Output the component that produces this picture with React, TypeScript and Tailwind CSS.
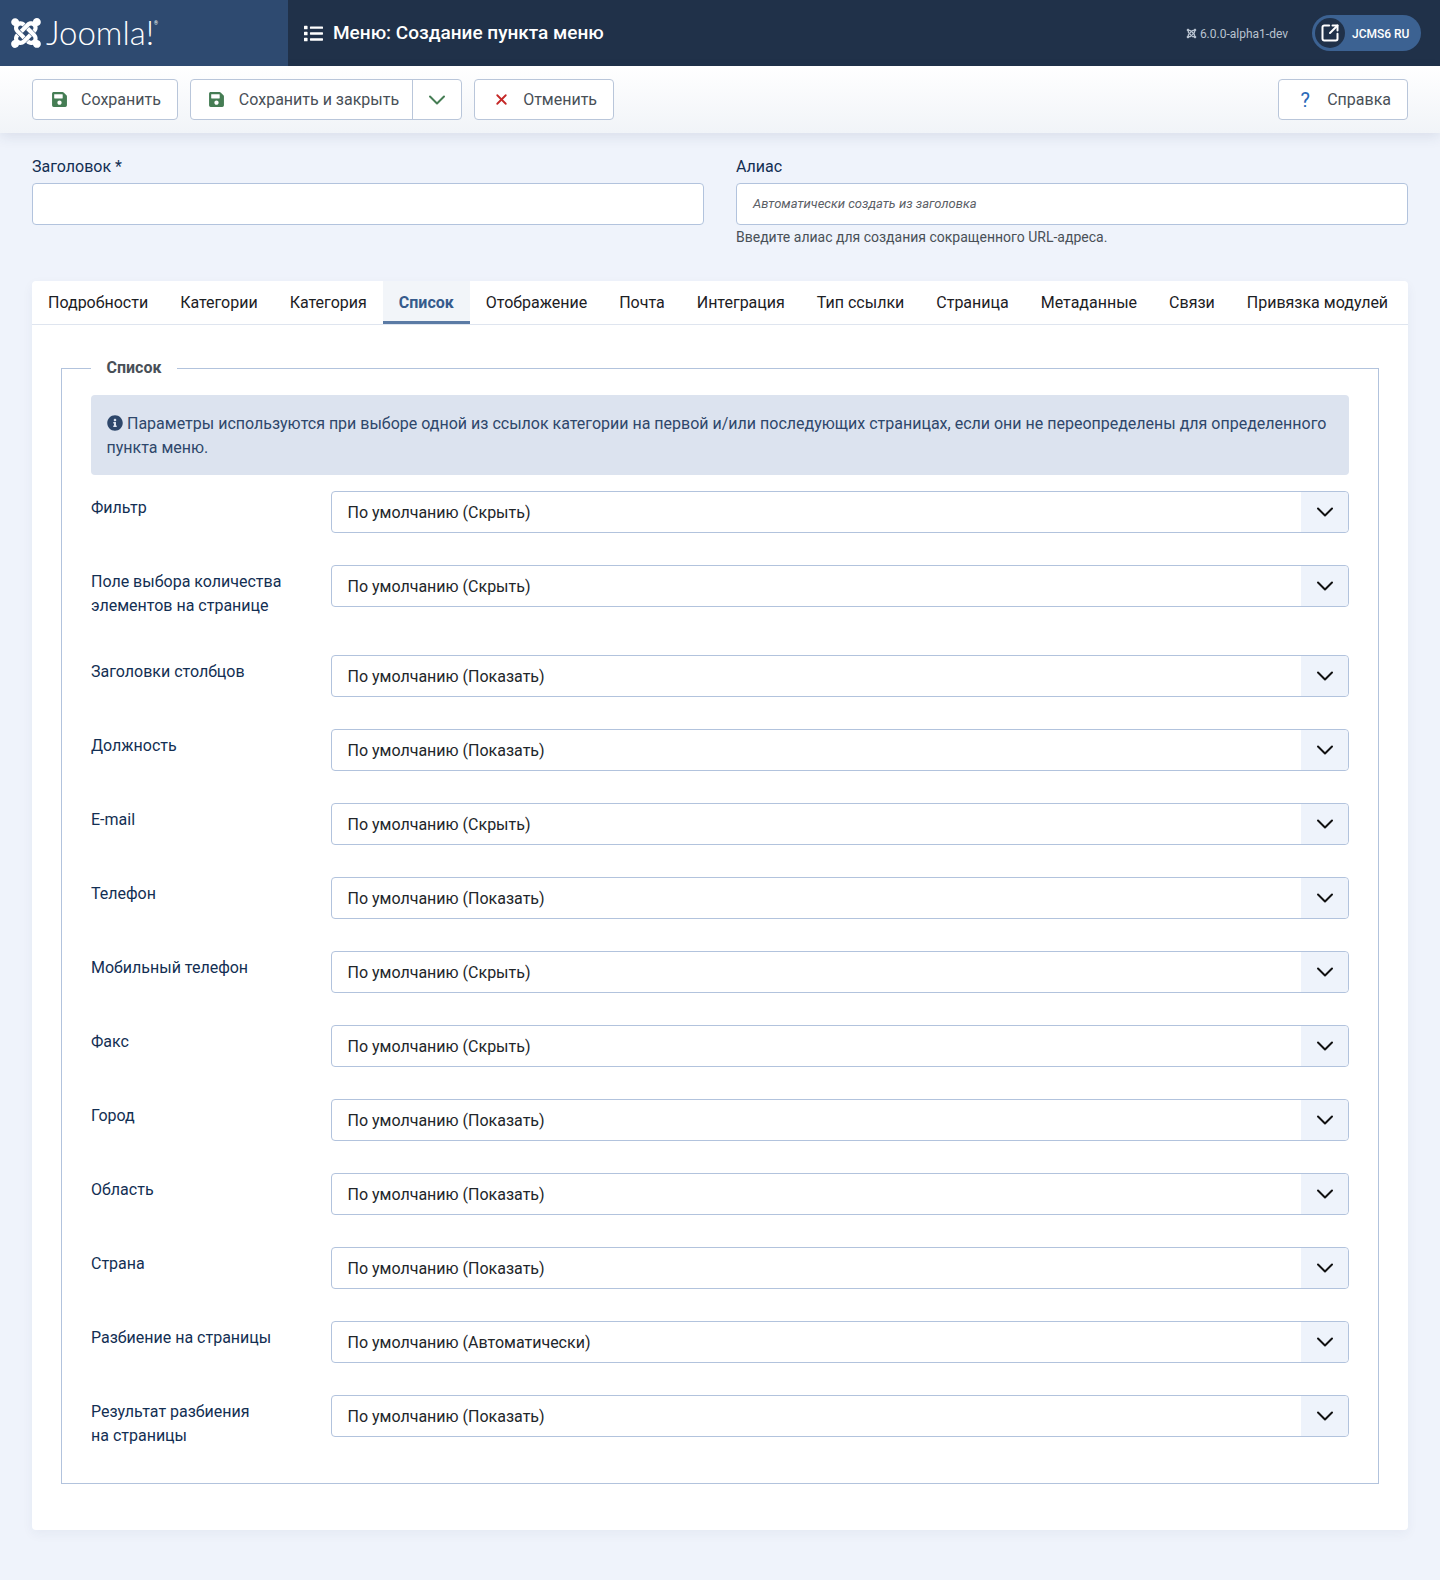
import { ChevronDown, SquareArrowOutUpRight, X } from "lucide-react";
import { FaInfoCircle, FaJoomla, FaList, FaSave } from "react-icons/fa";

const tabs = [
  "Подробности",
  "Категории",
  "Категория",
  "Список",
  "Отображение",
  "Почта",
  "Интеграция",
  "Тип ссылки",
  "Страница",
  "Метаданные",
  "Связи",
  "Привязка модулей",
];

const HIDE = "По умолчанию (Скрыть)";
const SHOW = "По умолчанию (Показать)";

const rows: { label: string[]; value: string }[] = [
  { label: ["Фильтр"], value: HIDE },
  { label: ["Поле выбора количества", "элементов на странице"], value: HIDE },
  { label: ["Заголовки столбцов"], value: SHOW },
  { label: ["Должность"], value: SHOW },
  { label: ["E-mail"], value: HIDE },
  { label: ["Телефон"], value: SHOW },
  { label: ["Мобильный телефон"], value: HIDE },
  { label: ["Факс"], value: HIDE },
  { label: ["Город"], value: SHOW },
  { label: ["Область"], value: SHOW },
  { label: ["Страна"], value: SHOW },
  { label: ["Разбиение на страницы"], value: "По умолчанию (Автоматически)" },
  { label: ["Результат разбиения", "на страницы"], value: SHOW },
];

function ToolbarButton({ icon, text }: { icon: React.ReactNode; text: string }) {
  return (
    <button className="flex h-[41px] items-center rounded-[4px] border border-[#b9c6da] bg-white pl-[18px] pr-[16px] text-[#495057]">
      <span className="flex w-[16px] justify-center">{icon}</span>
      <span className="ml-[14px]">{text}</span>
    </button>
  );
}

function SelectRow({ label, value }: { label: string[]; value: string }) {
  return (
    <div className="mb-[32px] flex last:mb-[30px]">
      <label className="w-[240px] shrink-0 pb-[5px] pt-[5px] text-[#132f53]">
        {label.map((line) => (
          <div key={line}>{line}</div>
        ))}
      </label>
      <div className="flex h-[42px] flex-1 items-center rounded-[4px] border border-[#b2c3dd] bg-white pl-[15.5px]">
        <span className="flex-1 pt-[1px] text-[#22262a]">{value}</span>
        <span className="flex h-full w-[47px] items-center justify-center rounded-r-[4px] bg-[#eef3fb]">
          <ChevronDown size={28} strokeWidth={1.7} className="text-[#111]" />
        </span>
      </div>
    </div>
  );
}

export default function App() {
  return (
    <div className="min-h-[1580px] bg-[#eff3fb] font-['Roboto',sans-serif] text-[16px] leading-[24px]">
      <header className="flex h-[66px] items-center bg-[#203149]">
        <div className="flex h-full w-[288px] items-center bg-[#2e4a70] pl-[9px] text-white">
          <FaJoomla size={34} />
          <span className="ml-[3px] -mt-[2px] font-['Lato',sans-serif] text-[33px] font-light leading-none">Joomla!</span>
          <sup className="-mt-[16px] text-[5px]">®</sup>
        </div>
        <div className="ml-[16px] flex items-center text-white">
          <FaList size={19} />
          <h1 className="ml-[10px] text-[19px] font-medium">Меню: Создание пункта меню</h1>
        </div>
        <div className="ml-auto mr-[19px] flex items-center">
          <span className="flex items-center pt-[1px] text-[12px] text-[#b9c3d0]">
            <FaJoomla size={11} className="mr-[3px]" />
            6.0.0-alpha1-dev
          </span>
          <div className="ml-[24px] flex h-[36px] w-[109px] items-center rounded-full bg-[#3c6292] pl-[3px] text-white">
            <span className="flex h-[30px] w-[30px] items-center justify-center rounded-full bg-[#203149]">
              <SquareArrowOutUpRight size={20} strokeWidth={2.4} />
            </span>
            <span className="ml-[7px] pt-[1px] text-[12px] font-medium">JCMS6 RU</span>
          </div>
        </div>
      </header>

      <div className="flex h-[67px] items-center bg-gradient-to-b from-white to-[#f1f4f8] px-[32px] shadow-[0_4px_12px_rgba(40,60,100,0.1)]">
        <ToolbarButton icon={<FaSave size={17} className="shrink-0 text-[#457d54]" />} text="Сохранить" />
        <div className="ml-[12px] flex h-[41px] items-center rounded-[4px] border border-[#b9c6da] bg-white pl-[18px] text-[#495057]">
          <span className="flex w-[16px] justify-center">
            <FaSave size={17} className="shrink-0 text-[#457d54]" />
          </span>
          <span className="ml-[14px] mr-[13px]">Сохранить и закрыть</span>
          <span className="flex h-full w-[49px] items-center justify-center border-l border-[#b9c6da]">
            <ChevronDown size={28} strokeWidth={1.7} className="text-[#457d54]" />
          </span>
        </div>
        <div className="ml-[12px]">
          <ToolbarButton icon={<X size={17} strokeWidth={2.6} className="shrink-0 text-[#c52827]" />} text="Отменить" />
        </div>
        <div className="ml-auto">
          <ToolbarButton icon={<span className="text-[20px] text-[#2a69b8]">?</span>} text="Справка" />
        </div>
      </div>

      <main className="px-[32px] pt-[22px]">
        <div className="flex gap-[32px]">
          <div className="flex-1">
            <label className="block text-[#132f53]">Заголовок *</label>
            <div className="mt-[4px] h-[42px] rounded-[4px] border border-[#b2c3dd] bg-white" />
          </div>
          <div className="flex-1">
            <label className="block text-[#132f53]">Алиас</label>
            <div className="mt-[4px] flex h-[42px] items-center rounded-[4px] border border-[#b2c3dd] bg-white pl-[16px] text-[13px] italic text-[#5b6066]">
              Автоматически создать из заголовка
            </div>
            <div className="text-[14px] text-[#495057]">Введите алиас для создания сокращенного URL-адреса.</div>
          </div>
        </div>

        <section className="mt-[32px] h-[1249px] rounded-[4px] bg-white shadow-[0_4px_12px_rgba(40,60,100,0.05)]">
          <nav className="flex h-[44px] border-b border-[#dfe5ef] text-[#1c2024]">
            {tabs.map((tab) =>
              tab === "Список" ? (
                <span
                  key={tab}
                  className="border-b-[3px] border-[#5b7ba5] bg-[#f2f5f9] px-[16px] pt-[10px] font-bold text-[#365b8c]"
                >
                  {tab}
                </span>
              ) : (
                <span key={tab} className="px-[16px] pt-[10px]">
                  {tab}
                </span>
              ),
            )}
          </nav>
          <fieldset className="mx-[29px] mt-[31px] border border-[#b2c3dd] px-[29px] pb-0">
            <legend className="px-[15.5px] font-bold text-[#495057]">Список</legend>
            <div className="mt-[15px] mb-[16px] h-[80px] rounded-[4px] bg-[#dce3ef] pl-[15.5px] pr-[16px] pt-[17px] text-[#2e476b]">
              <FaInfoCircle size={16} className="mr-[4.5px] inline-block align-[-2px] text-[#2e476b]" />
              Параметры используются при выборе одной из ссылок категории на первой и/или последующих страницах, если они не переопределены для определенного пункта меню.
            </div>
            {rows.map((row) => (
              <SelectRow key={row.label[0]} label={row.label} value={row.value} />
            ))}
          </fieldset>
        </section>
      </main>
    </div>
  );
}
